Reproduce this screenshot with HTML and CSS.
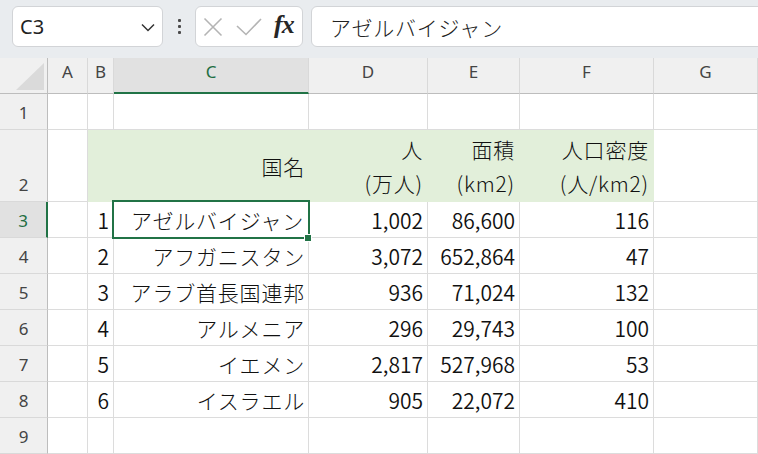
FILE: index.html
```html
<!DOCTYPE html>
<html lang="ja">
<head>
<meta charset="utf-8">
<link rel="stylesheet" href="styles.css">
</head>
<body>
<div class="toolbar">
  <div class="namebox">
    <span class="nb-text">C3</span>
    <svg class="chev" width="14" height="9" viewBox="0 0 14 9"><path d="M1 1.5 L7 7.5 L13 1.5" fill="none" stroke="#333" stroke-width="1.5"/></svg>
  </div>
  <div class="dots"><i></i><i></i><i></i></div>
  <div class="fbtns">
    <svg class="ic-x" width="20" height="20" viewBox="0 0 20 20"><path d="M1.5 1.5 L18.5 18.5 M18.5 1.5 L1.5 18.5" stroke="#b4b4b4" stroke-width="1.6" fill="none"/></svg>
    <svg class="ic-ok" width="26" height="18" viewBox="0 0 26 18"><path d="M1 8 L10 16.5 L25 1" stroke="#b4b4b4" stroke-width="1.6" fill="none"/></svg>
    <span class="fx">fx</span>
  </div>
  <div class="finput jp">アゼルバイジャン</div>
</div>
<div class="sheet">
  <div class="corner"><span class="tri"></span></div>
  <div class="ch">A</div>
  <div class="ch">B</div>
  <div class="ch sel">C</div>
  <div class="ch">D</div>
  <div class="ch">E</div>
  <div class="ch">F</div>
  <div class="ch">G</div>

  <div class="rh">1</div>
  <div class="c"></div><div class="c"></div><div class="c"></div><div class="c"></div><div class="c"></div><div class="c"></div><div class="c"></div>

  <div class="rh">2</div>
  <div class="c"></div>
  <div class="c fill"></div>
  <div class="c fill jp">国名</div>
  <div class="c fill two"><span class="jp">人</span><span class="par">(万人)</span></div>
  <div class="c fill two"><span class="jp">面積</span><span class="par">(km2)</span></div>
  <div class="c fill two"><span class="jp">人口密度</span><span class="par">(人/km2)</span></div>
  <div class="c"></div>

  <div class="rh sel">3</div>
  <div class="c"></div><div class="c n">1</div><div class="c active"><span class="jp">アゼルバイジャン</span><span class="selbox"></span><span class="handle"></span></div><div class="c n">1,002</div><div class="c n">86,600</div><div class="c n">116</div><div class="c"></div>

  <div class="rh">4</div>
  <div class="c"></div><div class="c n">2</div><div class="c jp">アフガニスタン</div><div class="c n">3,072</div><div class="c n">652,864</div><div class="c n">47</div><div class="c"></div>

  <div class="rh">5</div>
  <div class="c"></div><div class="c n">3</div><div class="c jp">アラブ首長国連邦</div><div class="c n">936</div><div class="c n">71,024</div><div class="c n">132</div><div class="c"></div>

  <div class="rh">6</div>
  <div class="c"></div><div class="c n">4</div><div class="c jp">アルメニア</div><div class="c n">296</div><div class="c n">29,743</div><div class="c n">100</div><div class="c"></div>

  <div class="rh">7</div>
  <div class="c"></div><div class="c n">5</div><div class="c jp">イエメン</div><div class="c n">2,817</div><div class="c n">527,968</div><div class="c n">53</div><div class="c"></div>

  <div class="rh">8</div>
  <div class="c"></div><div class="c n">6</div><div class="c jp">イスラエル</div><div class="c n">905</div><div class="c n">22,072</div><div class="c n">410</div><div class="c"></div>

  <div class="rh">9</div>
  <div class="c"></div><div class="c"></div><div class="c"></div><div class="c"></div><div class="c"></div><div class="c"></div><div class="c"></div>
</div>
</body>
</html>
```

FILE: styles.css
```css
* { box-sizing: border-box; }
html, body { margin: 0; padding: 0; }
body {
  width: 758px;
  height: 454px;
  overflow: hidden;
  background: #fff;
  font-family: "Noto Sans CJK JP", "Noto Sans", sans-serif;
}

.toolbar {
  height: 58px;
  background: #e9ecef;
  display: flex;
  align-items: flex-start;
  padding: 6px 0 0 12px;
  overflow: hidden;
}
.namebox {
  width: 151px;
  height: 41px;
  background: #fff;
  border: 1px solid #d2d4d7;
  border-radius: 6px;
  display: flex;
  align-items: center;
  justify-content: space-between;
  padding: 0 7px 0 7px;
}
.nb-text {
  font-family: "Noto Sans", sans-serif;
  font-size: 20px;
  color: #222;
}
.chev { margin-top: 1px; }
.dots {
  width: 32px;
  height: 41px;
  display: flex;
  flex-direction: column;
  align-items: center;
  justify-content: center;
  gap: 3px;
}
.dots i {
  display: block;
  width: 3px;
  height: 3px;
  border-radius: 1px;
  background: #4a4a4a;
}
.fbtns {
  width: 108px;
  height: 41px;
  background: #fff;
  border: 1px solid #d2d4d7;
  border-radius: 6px;
  display: flex;
  align-items: center;
  padding-left: 7px;
}
.ic-x { margin-top: 1px; }
.ic-ok { margin-left: 13px; margin-top: 1px; }
.fx {
  margin-left: 12px;
  font-family: "Liberation Serif", serif;
  font-style: italic;
  font-weight: bold;
  font-size: 26px;
  color: #262626;
  letter-spacing: -1px;
  margin-top: -3px;
}
.finput {
  flex: 1;
  margin-left: 8px;
  margin-right: -12px;
  height: 41px;
  background: #fff;
  border: 1px solid #d2d4d7;
  border-radius: 6px;
  display: flex;
  align-items: center;
  padding-left: 18px;
  font-size: 21px;
  font-weight: 300;
  color: #222;
}

.jp { letter-spacing: 0.8px; }

.sheet {
  display: grid;
  grid-template-columns: 48px 40px 26px 195px 119px 92px 134px 104px;
  grid-template-rows: 36px 36px 72px repeat(7, 36px);
}
.corner {
  background: #f0f0f0;
  border-right: 1px solid #bdbdbd;
  border-bottom: 1px solid #bdbdbd;
  position: relative;
}
.tri {
  position: absolute;
  left: 16px;
  top: 5px;
  width: 0;
  height: 0;
  border-left: 28px solid transparent;
  border-bottom: 27px solid #dadada;
}
.ch {
  background: #f0f0f0;
  border-right: 1px solid #d9d9d9;
  border-bottom: 1px solid #bdbdbd;
  display: flex;
  justify-content: center;
  align-items: center;
  padding-bottom: 8px;
  font-family: "Noto Sans", sans-serif;
  font-size: 17px;
  color: #444;
}
.ch.sel {
  background: #e1e1e1;
  border-bottom: 2px solid #217346;
  color: #1f6e43;
}
.rh {
  background: #f0f0f0;
  border-right: 1px solid #bdbdbd;
  border-bottom: 1px solid #d9d9d9;
  display: flex;
  justify-content: center;
  align-items: flex-end;
  padding-bottom: 5px;
  font-family: "Noto Sans", sans-serif;
  font-size: 17px;
  color: #444;
}
.rh.sel {
  background: #e1e1e1;
  border-right: 2px solid #217346;
  color: #1f6e43;
}
.c {
  border-right: 1px solid #dcdcdc;
  border-bottom: 1px solid #dcdcdc;
  display: flex;
  justify-content: flex-end;
  align-items: center;
  padding-right: 4px;
  font-size: 21px;
  font-weight: 300;
  color: #111;
  white-space: nowrap;
}
.c.n { font-weight: 350; }
.c.jp { padding-right: 3px; }
.par { letter-spacing: 0.8px; }
.c.fill {
  background: #e2efda;
  border-color: #e2efda;
}
.c.two {
  flex-direction: column;
  align-items: flex-end;
  justify-content: center;
  line-height: 34px;
}
.c.active { position: relative; }
.selbox {
  position: absolute;
  left: -2px;
  top: -2px;
  right: -2px;
  bottom: -2px;
  border: 2px solid #217346;
  pointer-events: none;
}
.handle {
  position: absolute;
  right: -4px;
  bottom: -5px;
  width: 8px;
  height: 8px;
  background: #217346;
  border: 1px solid #fff;
}
```
